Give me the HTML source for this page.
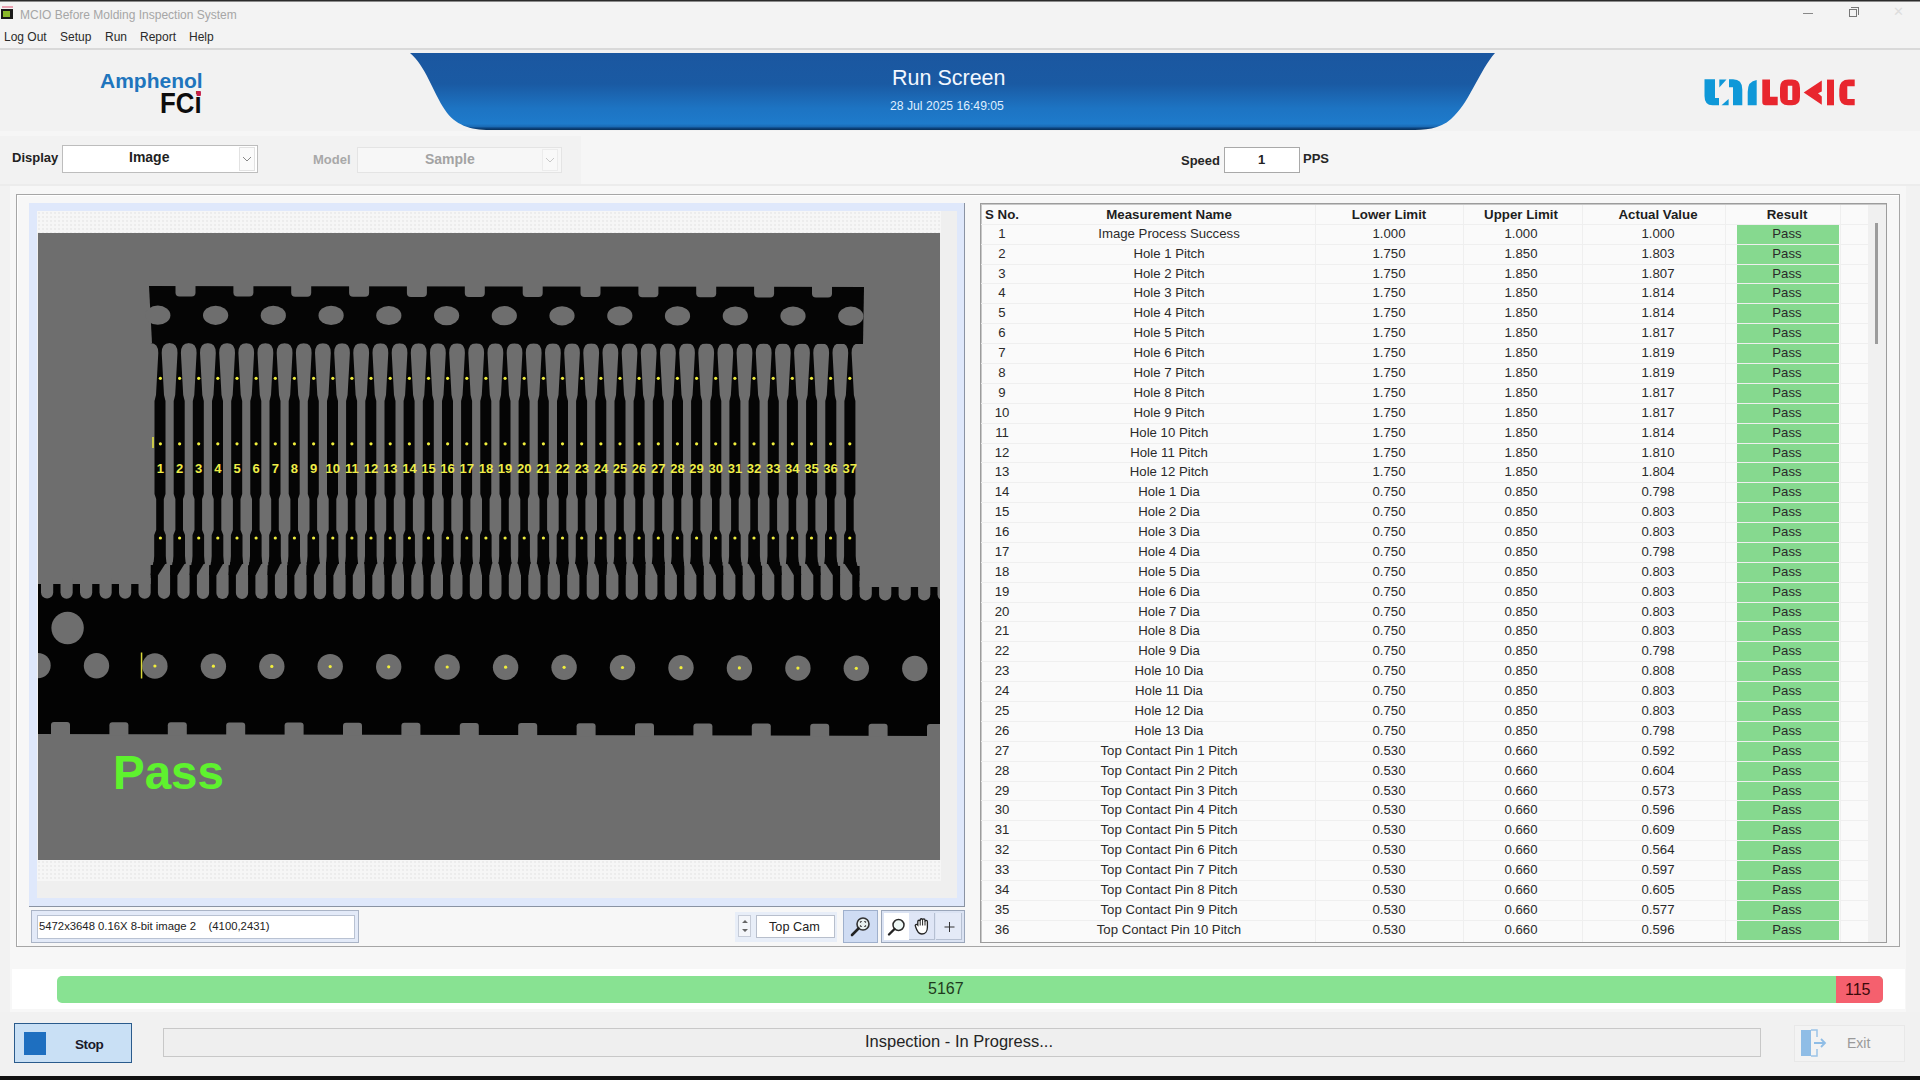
<!DOCTYPE html>
<html><head><meta charset="utf-8"><style>
*{box-sizing:border-box}
html,body{margin:0;padding:0}
body{width:1920px;height:1080px;position:relative;overflow:hidden;background:#f2f2f2;font-family:'Liberation Sans', sans-serif;color:#222}
.a{position:absolute}
.t{position:absolute;white-space:nowrap;line-height:1}
.row{position:absolute;left:0;height:20px;width:890px}
.c{position:absolute;top:0;height:20px;line-height:20px;text-align:center;font-size:13.2px;color:#2a2a2a;white-space:nowrap}
</style></head><body>

<div class="a" style="left:0;top:0;width:1920px;height:1px;background:#2b2b2b"></div><div class="a" style="left:0;top:1px;width:1920px;height:1px;background:#8a8a8a"></div>
<div class="a" style="left:0;top:2px;width:1920px;height:47px;background:#f3f3f3"></div>
<div class="a" style="left:1px;top:9px;width:12px;height:10px;background:#1a1a1a"></div><div class="a" style="left:3px;top:11px;width:7px;height:6px;background:#8ab82a"></div><div class="a" style="left:2px;top:6px;width:11px;height:2px;background:#e8a0b0"></div>
<div class="t" style="left:20px;top:9px;font-size:12px;color:#a6a6a6">MCIO Before Molding Inspection System</div>
<div class="a" style="left:1803px;top:13px;width:10px;height:1px;background:#888"></div>
<div class="a" style="left:1849px;top:9px;width:8px;height:8px;border:1px solid #777"></div><div class="a" style="left:1851px;top:7px;width:8px;height:8px;border-top:1px solid #777;border-right:1px solid #777"></div>
<div class="t" style="left:1893px;top:5px;font-size:13px;color:#ddd">&#x2715;</div>
<div class="t" style="left:4px;top:31px;font-size:12px;color:#2a2a2a">Log Out</div>
<div class="t" style="left:60px;top:31px;font-size:12px;color:#2a2a2a">Setup</div>
<div class="t" style="left:105px;top:31px;font-size:12px;color:#2a2a2a">Run</div>
<div class="t" style="left:140px;top:31px;font-size:12px;color:#2a2a2a">Report</div>
<div class="t" style="left:189px;top:31px;font-size:12px;color:#2a2a2a">Help</div>
<div class="a" style="left:0;top:48px;width:1920px;height:2px;background:#d9d9d9"></div>
<div class="t" style="left:100px;top:70px;font-size:21px;font-weight:bold;color:#2075bd;letter-spacing:0px">Amphenol</div>
<div class="t" style="left:160px;top:88.5px;font-size:29px;font-weight:bold;color:#0d0d0d;letter-spacing:0;transform:scaleX(0.89);transform-origin:0 0">FC<span style="position:relative">i<span class="a" style="left:2px;top:4px;width:5px;height:5px;border-radius:1px;background:#c8204a"></span></span></div>
<svg class="a" style="left:400px;top:50px" width="1110" height="85" viewBox="400 50 1110 85">
<defs><linearGradient id="bg" x1="0" y1="0" x2="0" y2="1">
<stop offset="0" stop-color="#1b57a0"/><stop offset="0.4" stop-color="#1a5aa3"/>
<stop offset="0.72" stop-color="#1d74c3"/><stop offset="0.92" stop-color="#1e7bcb"/>
<stop offset="0.955" stop-color="#1a6ab4"/><stop offset="0.975" stop-color="#0d4682"/><stop offset="1" stop-color="#072f58"/></linearGradient></defs>
<path d="M410,53 L1495,53 C1480,70 1470,100 1455,115 C1445,127 1430,130 1415,130 L490,130 C470,130 455,125 445,110 C433,92 425,65 410,53 Z" fill="url(#bg)"/>
</svg>
<div class="t" style="left:892px;top:68px;font-size:21.5px;color:#f2f7ff">Run Screen</div>
<div class="t" style="left:890px;top:100px;font-size:12.2px;color:#dfeeff">28 Jul 2025 16:49:05</div>
<svg class="a" style="left:1695px;top:70px" width="170" height="45" viewBox="1695 70 170 45">
<g fill="#0f98d8">
<path d="M1704.5,79.3 H1715 V98 H1719 V105.3 H1712.5 Q1704.5,105.3 1704.5,96 Z"/>
<path d="M1729,79.3 H1733 Q1742.3,79.3 1742.3,89.5 V105.3 H1733 V87.3 H1729 Z"/>
<path d="M1719.3,79.5 H1726.5 L1719.3,87.5 Z"/>
<path d="M1721.5,105.3 L1728.6,99 V105.3 Z"/>
<path d="M1756.7,80 V105.3 H1747.7 V92 Q1747.7,81 1756.7,80 Z"/>
</g>
<g fill="#e8262e">
<path d="M1762.3,79.6 H1770 V96.8 H1777.7 V105.3 H1765.5 Q1762.3,105.3 1762.3,102 Z"/>
<path d="M1788,79.6 H1792 Q1800,79.6 1800,88 V97 Q1800,105.3 1792,105.3 H1788 Q1780,105.3 1780,97 V88 Q1780,79.6 1788,79.6 Z M1787.8,85.7 V100 H1792.3 V85.7 Z" fill-rule="evenodd"/>
<path d="M1821.8,80.4 V91.5 L1818,93.3 L1821.8,96.5 V104.8 L1803.7,92.6 Z"/>
<path d="M1827,79.6 H1834 V105.3 H1827 Z"/>
<path d="M1849,79.6 H1854.7 V86.2 H1847.3 V99 H1854.7 V105.3 H1848 Q1839.3,105.3 1839.3,96 V89.5 Q1839.3,79.6 1849,79.6 Z"/>
</g></svg>
<div class="a" style="left:0;top:131px;width:1920px;height:5px;background:#f6f6f6"></div><div class="a" style="left:581px;top:136px;width:1339px;height:48px;background:#f6f6f6"></div><div class="a" style="left:0;top:184px;width:1920px;height:2px;background:#ececec"></div>
<div class="t" style="left:12px;top:151px;font-size:13px;font-weight:bold;color:#222">Display</div>
<div class="a" style="left:62px;top:145px;width:196px;height:28px;background:#fff;border:1px solid #bdbdbd"></div>
<div class="a" style="left:239px;top:147px;width:16px;height:24px;border:1px solid #e2e2e2;background:#fbfbfb"></div>
<svg class="a" style="left:241px;top:155px" width="12" height="8"><path d="M2,2 L6,6 L10,2" stroke="#888" fill="none" stroke-width="1"/></svg>
<div class="t" style="left:129px;top:150px;font-size:14px;font-weight:bold;color:#1f1f1f">Image</div>
<div class="t" style="left:313px;top:153px;font-size:13px;font-weight:bold;color:#a8a8a8">Model</div>
<div class="a" style="left:357px;top:147px;width:205px;height:26px;background:#f7f7f7;border:1px solid #e4e4e4"></div>
<div class="a" style="left:542px;top:149px;width:16px;height:22px;border:1px solid #ececec;background:#f9f9f9"></div>
<svg class="a" style="left:544px;top:156px" width="12" height="8"><path d="M2,2 L6,6 L10,2" stroke="#c8c8c8" fill="none" stroke-width="1"/></svg>
<div class="t" style="left:425px;top:152px;font-size:14px;font-weight:bold;color:#a3a3a3">Sample</div>
<div class="t" style="left:1181px;top:154px;font-size:13px;font-weight:bold;color:#262626">Speed</div>
<div class="a" style="left:1224px;top:147px;width:76px;height:26px;background:#fff;border:1px solid #a9a9a9"></div>
<div class="t" style="left:1258px;top:153px;font-size:13px;font-weight:bold;color:#222">1</div>
<div class="t" style="left:1303px;top:152px;font-size:13px;font-weight:bold;color:#262626">PPS</div>
<div class="a" style="left:10px;top:186px;width:1896px;height:828px;background:#f7f7f7"></div>
<div class="a" style="left:16px;top:194px;width:1884px;height:753px;border:1px solid #a6a6a6;box-shadow:inset 1px 1px 0 #fff"></div>
<div class="a" style="left:29px;top:203px;width:936px;height:704px;background:#dfe8fb;border-right:1.5px solid #8a93a3;border-bottom:1.5px solid #8a93a3"></div>
<div class="a" style="left:37px;top:211px;width:920px;height:687px;background:#efefef"></div>
<div class="a" style="left:37px;top:211px;width:904px;height:22px;background-color:#f6f6f6;background-image:radial-gradient(#ececec 0.7px, transparent 0.8px);background-size:4px 4px"></div>
<div class="a" style="left:37px;top:860px;width:904px;height:21px;background-color:#f6f6f6;background-image:radial-gradient(#ececec 0.7px, transparent 0.8px);background-size:4px 4px"></div>
<svg class="a" style="left:38px;top:233px" width="902" height="627" viewBox="38 233 902 627"><rect x="38" y="233" width="902" height="627" fill="#6e6e6e"/><path d="M149,286 L864,287 L863,344 L152,343 Z" fill="#050505"/><path d="M175.5,280 L195.5,280 L195.5,292.5 Q195.5,296.5 191.5,296.5 L179.5,296.5 Q175.5,296.5 175.5,292.5 Z" fill="#6e6e6e"/><path d="M233.4,280 L253.4,280 L253.4,292.6 Q253.4,296.6 249.4,296.6 L237.4,296.6 Q233.4,296.6 233.4,292.6 Z" fill="#6e6e6e"/><path d="M291.2,280 L311.2,280 L311.2,292.7 Q311.2,296.7 307.2,296.7 L295.2,296.7 Q291.2,296.7 291.2,292.7 Z" fill="#6e6e6e"/><path d="M349.1,280 L369.1,280 L369.1,292.8 Q369.1,296.8 365.1,296.8 L353.1,296.8 Q349.1,296.8 349.1,292.8 Z" fill="#6e6e6e"/><path d="M406.9,280 L426.9,280 L426.9,292.9 Q426.9,296.9 422.9,296.9 L410.9,296.9 Q406.9,296.9 406.9,292.9 Z" fill="#6e6e6e"/><path d="M464.8,280 L484.8,280 L484.8,292.9 Q484.8,296.9 480.8,296.9 L468.8,296.9 Q464.8,296.9 464.8,292.9 Z" fill="#6e6e6e"/><path d="M522.7,280 L542.7,280 L542.7,293.0 Q542.7,297.0 538.7,297.0 L526.7,297.0 Q522.7,297.0 522.7,293.0 Z" fill="#6e6e6e"/><path d="M580.5,280 L600.5,280 L600.5,293.1 Q600.5,297.1 596.5,297.1 L584.5,297.1 Q580.5,297.1 580.5,293.1 Z" fill="#6e6e6e"/><path d="M638.4,280 L658.4,280 L658.4,293.2 Q658.4,297.2 654.4,297.2 L642.4,297.2 Q638.4,297.2 638.4,293.2 Z" fill="#6e6e6e"/><path d="M696.2,280 L716.2,280 L716.2,293.3 Q716.2,297.3 712.2,297.3 L700.2,297.3 Q696.2,297.3 696.2,293.3 Z" fill="#6e6e6e"/><path d="M754.1,280 L774.1,280 L774.1,293.4 Q774.1,297.4 770.1,297.4 L758.1,297.4 Q754.1,297.4 754.1,293.4 Z" fill="#6e6e6e"/><path d="M812.0,280 L832.0,280 L832.0,293.5 Q832.0,297.5 828.0,297.5 L816.0,297.5 Q812.0,297.5 812.0,293.5 Z" fill="#6e6e6e"/><ellipse cx="157.8" cy="315.2" rx="12.6" ry="9.6" fill="#6e6e6e"/><ellipse cx="215.6" cy="315.3" rx="12.6" ry="9.6" fill="#6e6e6e"/><ellipse cx="273.3" cy="315.4" rx="12.6" ry="9.6" fill="#6e6e6e"/><ellipse cx="331.1" cy="315.4" rx="12.6" ry="9.6" fill="#6e6e6e"/><ellipse cx="388.8" cy="315.5" rx="12.6" ry="9.6" fill="#6e6e6e"/><ellipse cx="446.6" cy="315.6" rx="12.6" ry="9.6" fill="#6e6e6e"/><ellipse cx="504.3" cy="315.7" rx="12.6" ry="9.6" fill="#6e6e6e"/><ellipse cx="562.0" cy="315.8" rx="12.6" ry="9.6" fill="#6e6e6e"/><ellipse cx="619.8" cy="315.8" rx="12.6" ry="9.6" fill="#6e6e6e"/><ellipse cx="677.5" cy="315.9" rx="12.6" ry="9.6" fill="#6e6e6e"/><ellipse cx="735.3" cy="316.0" rx="12.6" ry="9.6" fill="#6e6e6e"/><ellipse cx="793.0" cy="316.1" rx="12.6" ry="9.6" fill="#6e6e6e"/><ellipse cx="850.8" cy="316.2" rx="12.6" ry="9.6" fill="#6e6e6e"/><path d="M38,584 L150.7,584 L150.7,565 L859.6,566 L859.6,587 L940,587 L940,736 L38,734 Z" fill="#030303"/><path d="M41.0,578 L53.2,578 L53.2,592.5 A6.1,6.1 0 0 1 41.0,592.5 Z" fill="#6e6e6e"/><path d="M60.5,578 L72.7,578 L72.7,592.6 A6.1,6.1 0 0 1 60.5,592.6 Z" fill="#6e6e6e"/><path d="M80.0,578 L92.2,578 L92.2,592.6 A6.1,6.1 0 0 1 80.0,592.6 Z" fill="#6e6e6e"/><path d="M99.5,578 L111.7,578 L111.7,592.6 A6.1,6.1 0 0 1 99.5,592.6 Z" fill="#6e6e6e"/><path d="M119.0,578 L131.2,578 L131.2,592.7 A6.1,6.1 0 0 1 119.0,592.7 Z" fill="#6e6e6e"/><path d="M138.5,578 L150.7,578 L150.7,592.7 A6.1,6.1 0 0 1 138.5,592.7 Z" fill="#6e6e6e"/><path d="M157.9,560 L170.1,560 L170.1,592.8 A6.1,6.1 0 0 1 157.9,592.8 Z" fill="#6e6e6e"/><path d="M177.4,560 L189.6,560 L189.6,592.8 A6.1,6.1 0 0 1 177.4,592.8 Z" fill="#6e6e6e"/><path d="M196.9,560 L209.1,560 L209.1,592.9 A6.1,6.1 0 0 1 196.9,592.9 Z" fill="#6e6e6e"/><path d="M216.4,560 L228.6,560 L228.6,592.9 A6.1,6.1 0 0 1 216.4,592.9 Z" fill="#6e6e6e"/><path d="M235.9,560 L248.1,560 L248.1,593.0 A6.1,6.1 0 0 1 235.9,593.0 Z" fill="#6e6e6e"/><path d="M255.4,560 L267.6,560 L267.6,593.0 A6.1,6.1 0 0 1 255.4,593.0 Z" fill="#6e6e6e"/><path d="M274.9,560 L287.1,560 L287.1,593.0 A6.1,6.1 0 0 1 274.9,593.0 Z" fill="#6e6e6e"/><path d="M294.4,560 L306.6,560 L306.6,593.1 A6.1,6.1 0 0 1 294.4,593.1 Z" fill="#6e6e6e"/><path d="M313.9,560 L326.1,560 L326.1,593.1 A6.1,6.1 0 0 1 313.9,593.1 Z" fill="#6e6e6e"/><path d="M333.4,560 L345.6,560 L345.6,593.2 A6.1,6.1 0 0 1 333.4,593.2 Z" fill="#6e6e6e"/><path d="M352.8,560 L365.0,560 L365.0,593.2 A6.1,6.1 0 0 1 352.8,593.2 Z" fill="#6e6e6e"/><path d="M372.3,560 L384.5,560 L384.5,593.3 A6.1,6.1 0 0 1 372.3,593.3 Z" fill="#6e6e6e"/><path d="M391.8,560 L404.0,560 L404.0,593.3 A6.1,6.1 0 0 1 391.8,593.3 Z" fill="#6e6e6e"/><path d="M411.3,560 L423.5,560 L423.5,593.3 A6.1,6.1 0 0 1 411.3,593.3 Z" fill="#6e6e6e"/><path d="M430.8,560 L443.0,560 L443.0,593.4 A6.1,6.1 0 0 1 430.8,593.4 Z" fill="#6e6e6e"/><path d="M450.3,560 L462.5,560 L462.5,593.4 A6.1,6.1 0 0 1 450.3,593.4 Z" fill="#6e6e6e"/><path d="M469.8,560 L482.0,560 L482.0,593.5 A6.1,6.1 0 0 1 469.8,593.5 Z" fill="#6e6e6e"/><path d="M489.3,560 L501.5,560 L501.5,593.5 A6.1,6.1 0 0 1 489.3,593.5 Z" fill="#6e6e6e"/><path d="M508.8,560 L521.0,560 L521.0,593.6 A6.1,6.1 0 0 1 508.8,593.6 Z" fill="#6e6e6e"/><path d="M528.3,560 L540.5,560 L540.5,593.6 A6.1,6.1 0 0 1 528.3,593.6 Z" fill="#6e6e6e"/><path d="M547.7,560 L559.9,560 L559.9,593.6 A6.1,6.1 0 0 1 547.7,593.6 Z" fill="#6e6e6e"/><path d="M567.2,560 L579.4,560 L579.4,593.7 A6.1,6.1 0 0 1 567.2,593.7 Z" fill="#6e6e6e"/><path d="M586.7,560 L598.9,560 L598.9,593.7 A6.1,6.1 0 0 1 586.7,593.7 Z" fill="#6e6e6e"/><path d="M606.2,560 L618.4,560 L618.4,593.8 A6.1,6.1 0 0 1 606.2,593.8 Z" fill="#6e6e6e"/><path d="M625.7,560 L637.9,560 L637.9,593.8 A6.1,6.1 0 0 1 625.7,593.8 Z" fill="#6e6e6e"/><path d="M645.2,560 L657.4,560 L657.4,593.9 A6.1,6.1 0 0 1 645.2,593.9 Z" fill="#6e6e6e"/><path d="M664.7,560 L676.9,560 L676.9,593.9 A6.1,6.1 0 0 1 664.7,593.9 Z" fill="#6e6e6e"/><path d="M684.2,560 L696.4,560 L696.4,593.9 A6.1,6.1 0 0 1 684.2,593.9 Z" fill="#6e6e6e"/><path d="M703.7,560 L715.9,560 L715.9,594.0 A6.1,6.1 0 0 1 703.7,594.0 Z" fill="#6e6e6e"/><path d="M723.2,560 L735.4,560 L735.4,594.0 A6.1,6.1 0 0 1 723.2,594.0 Z" fill="#6e6e6e"/><path d="M742.6,560 L754.8,560 L754.8,594.1 A6.1,6.1 0 0 1 742.6,594.1 Z" fill="#6e6e6e"/><path d="M762.1,560 L774.3,560 L774.3,594.1 A6.1,6.1 0 0 1 762.1,594.1 Z" fill="#6e6e6e"/><path d="M781.6,560 L793.8,560 L793.8,594.2 A6.1,6.1 0 0 1 781.6,594.2 Z" fill="#6e6e6e"/><path d="M801.1,560 L813.3,560 L813.3,594.2 A6.1,6.1 0 0 1 801.1,594.2 Z" fill="#6e6e6e"/><path d="M820.6,560 L832.8,560 L832.8,594.2 A6.1,6.1 0 0 1 820.6,594.2 Z" fill="#6e6e6e"/><path d="M840.1,560 L852.3,560 L852.3,594.3 A6.1,6.1 0 0 1 840.1,594.3 Z" fill="#6e6e6e"/><path d="M859.6,581 L871.8,581 L871.8,594.3 A6.1,6.1 0 0 1 859.6,594.3 Z" fill="#6e6e6e"/><path d="M879.1,581 L891.3,581 L891.3,594.4 A6.1,6.1 0 0 1 879.1,594.4 Z" fill="#6e6e6e"/><path d="M898.6,581 L910.8,581 L910.8,594.4 A6.1,6.1 0 0 1 898.6,594.4 Z" fill="#6e6e6e"/><path d="M918.1,581 L930.3,581 L930.3,594.5 A6.1,6.1 0 0 1 918.1,594.5 Z" fill="#6e6e6e"/><path d="M937.5,581 L949.7,581 L949.7,594.5 A6.1,6.1 0 0 1 937.5,594.5 Z" fill="#6e6e6e"/><path d="M150.4,343 Q158.3,343 158.3,353 L156.0,395 L154.5,401 L154.5,494 L156.2,499 L156.2,530 L154.2,535 L154.2,556 L153.5,564 L166.5,564 L165.8,556 L165.8,535 L163.8,530 L163.8,499 L165.5,494 L165.5,401 L164.0,395 L161.7,353 Q161.7,343 169.6,343 Z" fill="#050505"/><path d="M153.5,562 L166.5,562 L158.1,575 L150.5,575 Z" fill="#050505"/><path d="M169.6,343 Q177.5,343 177.5,353 L175.2,395 L173.7,401 L173.7,494 L175.4,499 L175.4,530 L173.4,535 L173.4,556 L172.7,564 L185.7,564 L185.0,556 L185.0,535 L183.0,530 L183.0,499 L184.7,494 L184.7,401 L183.2,395 L180.9,353 Q180.9,343 188.8,343 Z" fill="#050505"/><path d="M172.7,562 L185.7,562 L177.6,575 L170.0,575 Z" fill="#050505"/><path d="M188.7,343 Q196.6,343 196.6,353 L194.3,395 L192.8,401 L192.8,494 L194.5,499 L194.5,530 L192.5,535 L192.5,556 L191.8,564 L204.8,564 L204.1,556 L204.1,535 L202.1,530 L202.1,499 L203.8,494 L203.8,401 L202.3,395 L200.0,353 Q200.0,343 207.9,343 Z" fill="#050505"/><path d="M191.8,562 L204.8,562 L197.1,575 L189.5,575 Z" fill="#050505"/><path d="M207.9,343 Q215.8,343 215.8,353 L213.5,395 L212.0,401 L212.0,494 L213.7,499 L213.7,530 L211.7,535 L211.7,556 L211.0,564 L224.0,564 L223.3,556 L223.3,535 L221.3,530 L221.3,499 L223.0,494 L223.0,401 L221.5,395 L219.2,353 Q219.2,343 227.1,343 Z" fill="#050505"/><path d="M211.0,562 L224.0,562 L216.6,575 L209.0,575 Z" fill="#050505"/><path d="M227.1,343 Q235.0,343 235.0,353 L232.7,395 L231.2,401 L231.2,494 L232.9,499 L232.9,530 L230.9,535 L230.9,556 L230.2,564 L243.2,564 L242.5,556 L242.5,535 L240.5,530 L240.5,499 L242.2,494 L242.2,401 L240.7,395 L238.4,353 Q238.4,343 246.3,343 Z" fill="#050505"/><path d="M230.2,562 L243.2,562 L236.1,575 L228.5,575 Z" fill="#050505"/><path d="M246.2,343 Q254.1,343 254.1,353 L251.8,395 L250.3,401 L250.3,494 L252.0,499 L252.0,530 L250.0,535 L250.0,556 L249.3,564 L262.3,564 L261.6,556 L261.6,535 L259.6,530 L259.6,499 L261.3,494 L261.3,401 L259.8,395 L257.5,353 Q257.5,343 265.4,343 Z" fill="#050505"/><path d="M249.3,562 L262.3,562 L255.6,575 L247.9,575 Z" fill="#050505"/><path d="M265.4,343 Q273.3,343 273.3,353 L271.0,395 L269.5,401 L269.5,494 L271.2,499 L271.2,530 L269.2,535 L269.2,556 L268.5,564 L281.5,564 L280.8,556 L280.8,535 L278.8,530 L278.8,499 L280.5,494 L280.5,401 L279.0,395 L276.7,353 Q276.7,343 284.6,343 Z" fill="#050505"/><path d="M268.5,562 L281.5,562 L275.0,575 L267.4,575 Z" fill="#050505"/><path d="M284.6,343 Q292.5,343 292.5,353 L290.2,395 L288.7,401 L288.7,494 L290.4,499 L290.4,530 L288.4,535 L288.4,556 L287.7,564 L300.7,564 L300.0,556 L300.0,535 L298.0,530 L298.0,499 L299.7,494 L299.7,401 L298.2,395 L295.9,353 Q295.9,343 303.8,343 Z" fill="#050505"/><path d="M287.7,562 L300.7,562 L294.5,575 L286.9,575 Z" fill="#050505"/><path d="M303.7,343 Q311.6,343 311.6,353 L309.3,395 L307.8,401 L307.8,494 L309.5,499 L309.5,530 L307.5,535 L307.5,556 L306.8,564 L319.8,564 L319.1,556 L319.1,535 L317.1,530 L317.1,499 L318.8,494 L318.8,401 L317.3,395 L315.0,353 Q315.0,343 322.9,343 Z" fill="#050505"/><path d="M306.8,562 L319.8,562 L314.0,575 L306.4,575 Z" fill="#050505"/><path d="M322.9,343 Q330.8,343 330.8,353 L328.5,395 L327.0,401 L327.0,494 L328.7,499 L328.7,530 L326.7,535 L326.7,556 L326.0,564 L339.0,564 L338.3,556 L338.3,535 L336.3,530 L336.3,499 L338.0,494 L338.0,401 L336.5,395 L334.2,353 Q334.2,343 342.1,343 Z" fill="#050505"/><path d="M326.0,562 L339.0,562 L333.5,575 L325.9,575 Z" fill="#050505"/><path d="M342.0,343 Q349.9,343 349.9,353 L347.6,395 L346.1,401 L346.1,494 L347.8,499 L347.8,530 L345.8,535 L345.8,556 L345.1,564 L358.1,564 L357.4,556 L357.4,535 L355.4,530 L355.4,499 L357.1,494 L357.1,401 L355.6,395 L353.3,353 Q353.3,343 361.2,343 Z" fill="#050505"/><path d="M345.1,562 L358.1,562 L353.0,575 L345.4,575 Z" fill="#050505"/><path d="M361.2,343 Q369.1,343 369.1,353 L366.8,395 L365.3,401 L365.3,494 L367.0,499 L367.0,530 L365.0,535 L365.0,556 L364.3,564 L377.3,564 L376.6,556 L376.6,535 L374.6,530 L374.6,499 L376.3,494 L376.3,401 L374.8,395 L372.5,353 Q372.5,343 380.4,343 Z" fill="#050505"/><path d="M364.3,562 L377.3,562 L372.5,575 L364.9,575 Z" fill="#050505"/><path d="M380.4,343 Q388.3,343 388.3,353 L386.0,395 L384.5,401 L384.5,494 L386.2,499 L386.2,530 L384.2,535 L384.2,556 L383.5,564 L396.5,564 L395.8,556 L395.8,535 L393.8,530 L393.8,499 L395.5,494 L395.5,401 L394.0,395 L391.7,353 Q391.7,343 399.6,343 Z" fill="#050505"/><path d="M383.5,562 L396.5,562 L392.0,575 L384.4,575 Z" fill="#050505"/><path d="M399.5,343 Q407.4,343 407.4,353 L405.1,395 L403.6,401 L403.6,494 L405.3,499 L405.3,530 L403.3,535 L403.3,556 L402.6,564 L415.6,564 L414.9,556 L414.9,535 L412.9,530 L412.9,499 L414.6,494 L414.6,401 L413.1,395 L410.8,353 Q410.8,343 418.7,343 Z" fill="#050505"/><path d="M402.6,562 L415.6,562 L411.5,575 L403.9,575 Z" fill="#050505"/><path d="M418.7,343 Q426.6,343 426.6,353 L424.3,395 L422.8,401 L422.8,494 L424.5,499 L424.5,530 L422.5,535 L422.5,556 L421.8,564 L434.8,564 L434.1,556 L434.1,535 L432.1,530 L432.1,499 L433.8,494 L433.8,401 L432.3,395 L430.0,353 Q430.0,343 437.9,343 Z" fill="#050505"/><path d="M421.8,562 L434.8,562 L431.0,575 L423.4,575 Z" fill="#050505"/><path d="M437.9,343 Q445.8,343 445.8,353 L443.5,395 L442.0,401 L442.0,494 L443.7,499 L443.7,530 L441.7,535 L441.7,556 L441.0,564 L454.0,564 L453.3,556 L453.3,535 L451.3,530 L451.3,499 L453.0,494 L453.0,401 L451.5,395 L449.2,353 Q449.2,343 457.1,343 Z" fill="#050505"/><path d="M441.0,562 L454.0,562 L450.4,575 L442.8,575 Z" fill="#050505"/><path d="M457.0,343 Q464.9,343 464.9,353 L462.6,395 L461.1,401 L461.1,494 L462.8,499 L462.8,530 L460.8,535 L460.8,556 L460.1,564 L473.1,564 L472.4,556 L472.4,535 L470.4,530 L470.4,499 L472.1,494 L472.1,401 L470.6,395 L468.3,353 Q468.3,343 476.2,343 Z" fill="#050505"/><path d="M460.1,562 L473.1,562 L469.9,575 L462.3,575 Z" fill="#050505"/><path d="M476.2,343 Q484.1,343 484.1,353 L481.8,395 L480.3,401 L480.3,494 L482.0,499 L482.0,530 L480.0,535 L480.0,556 L479.3,564 L492.3,564 L491.6,556 L491.6,535 L489.6,530 L489.6,499 L491.3,494 L491.3,401 L489.8,395 L487.5,353 Q487.5,343 495.4,343 Z" fill="#050505"/><path d="M479.3,562 L492.3,562 L489.4,575 L481.8,575 Z" fill="#050505"/><path d="M495.4,343 Q503.3,343 503.3,353 L501.0,395 L499.5,401 L499.5,494 L501.2,499 L501.2,530 L499.2,535 L499.2,556 L498.5,564 L511.5,564 L510.8,556 L510.8,535 L508.8,530 L508.8,499 L510.5,494 L510.5,401 L509.0,395 L506.7,353 Q506.7,343 514.6,343 Z" fill="#050505"/><path d="M498.5,562 L511.5,562 L508.9,575 L501.3,575 Z" fill="#050505"/><path d="M514.5,343 Q522.4,343 522.4,353 L520.1,395 L518.6,401 L518.6,494 L520.3,499 L520.3,530 L518.3,535 L518.3,556 L517.6,564 L530.6,564 L529.9,556 L529.9,535 L527.9,530 L527.9,499 L529.6,494 L529.6,401 L528.1,395 L525.8,353 Q525.8,343 533.7,343 Z" fill="#050505"/><path d="M517.6,562 L530.6,562 L528.4,575 L520.8,575 Z" fill="#050505"/><path d="M533.7,343 Q541.6,343 541.6,353 L539.3,395 L537.8,401 L537.8,494 L539.5,499 L539.5,530 L537.5,535 L537.5,556 L536.8,564 L549.8,564 L549.1,556 L549.1,535 L547.1,530 L547.1,499 L548.8,494 L548.8,401 L547.3,395 L545.0,353 Q545.0,343 552.9,343 Z" fill="#050505"/><path d="M536.8,562 L549.8,562 L547.9,575 L540.3,575 Z" fill="#050505"/><path d="M552.9,343 Q560.8,343 560.8,353 L558.5,395 L557.0,401 L557.0,494 L558.7,499 L558.7,530 L556.7,535 L556.7,556 L556.0,564 L569.0,564 L568.3,556 L568.3,535 L566.3,530 L566.3,499 L568.0,494 L568.0,401 L566.5,395 L564.2,353 Q564.2,343 572.1,343 Z" fill="#050505"/><path d="M556.0,562 L569.0,562 L567.4,575 L559.8,575 Z" fill="#050505"/><path d="M572.0,343 Q579.9,343 579.9,353 L577.6,395 L576.1,401 L576.1,494 L577.8,499 L577.8,530 L575.8,535 L575.8,556 L575.1,564 L588.1,564 L587.4,556 L587.4,535 L585.4,530 L585.4,499 L587.1,494 L587.1,401 L585.6,395 L583.3,353 Q583.3,343 591.2,343 Z" fill="#050505"/><path d="M575.1,562 L588.1,562 L586.9,575 L579.3,575 Z" fill="#050505"/><path d="M591.2,343 Q599.1,343 599.1,353 L596.8,395 L595.3,401 L595.3,494 L597.0,499 L597.0,530 L595.0,535 L595.0,556 L594.3,564 L607.3,564 L606.6,556 L606.6,535 L604.6,530 L604.6,499 L606.3,494 L606.3,401 L604.8,395 L602.5,353 Q602.5,343 610.4,343 Z" fill="#050505"/><path d="M594.3,562 L607.3,562 L606.4,575 L598.8,575 Z" fill="#050505"/><path d="M610.4,343 Q618.3,343 618.3,353 L616.0,395 L614.5,401 L614.5,494 L616.2,499 L616.2,530 L614.2,535 L614.2,556 L613.5,564 L626.5,564 L625.8,556 L625.8,535 L623.8,530 L623.8,499 L625.5,494 L625.5,401 L624.0,395 L621.7,353 Q621.7,343 629.6,343 Z" fill="#050505"/><path d="M613.5,562 L626.5,562 L625.9,575 L618.3,575 Z" fill="#050505"/><path d="M629.5,343 Q637.4,343 637.4,353 L635.1,395 L633.6,401 L633.6,494 L635.3,499 L635.3,530 L633.3,535 L633.3,556 L632.6,564 L645.6,564 L644.9,556 L644.9,535 L642.9,530 L642.9,499 L644.6,494 L644.6,401 L643.1,395 L640.8,353 Q640.8,343 648.7,343 Z" fill="#050505"/><path d="M632.6,562 L645.6,562 L645.3,575 L637.8,575 Z" fill="#050505"/><path d="M648.7,343 Q656.6,343 656.6,353 L654.3,395 L652.8,401 L652.8,494 L654.5,499 L654.5,530 L652.5,535 L652.5,556 L651.8,564 L664.8,564 L664.1,556 L664.1,535 L662.1,530 L662.1,499 L663.8,494 L663.8,401 L662.3,395 L660.0,353 Q660.0,343 667.9,343 Z" fill="#050505"/><path d="M651.8,562 L664.8,562 L664.8,575 L657.2,575 Z" fill="#050505"/><path d="M667.9,343 Q675.8,343 675.8,353 L673.5,395 L672.0,401 L672.0,494 L673.7,499 L673.7,530 L671.7,535 L671.7,556 L671.0,564 L684.0,564 L683.3,556 L683.3,535 L681.3,530 L681.3,499 L683.0,494 L683.0,401 L681.5,395 L679.2,353 Q679.2,343 687.1,343 Z" fill="#050505"/><path d="M671.0,562 L684.0,562 L684.3,575 L676.7,575 Z" fill="#050505"/><path d="M687.0,343 Q694.9,343 694.9,353 L692.6,395 L691.1,401 L691.1,494 L692.8,499 L692.8,530 L690.8,535 L690.8,556 L690.1,564 L703.1,564 L702.4,556 L702.4,535 L700.4,530 L700.4,499 L702.1,494 L702.1,401 L700.6,395 L698.3,353 Q698.3,343 706.2,343 Z" fill="#050505"/><path d="M690.1,562 L703.1,562 L703.8,575 L696.2,575 Z" fill="#050505"/><path d="M706.2,343 Q714.1,343 714.1,353 L711.8,395 L710.3,401 L710.3,494 L712.0,499 L712.0,530 L710.0,535 L710.0,556 L709.3,564 L722.3,564 L721.6,556 L721.6,535 L719.6,530 L719.6,499 L721.3,494 L721.3,401 L719.8,395 L717.5,353 Q717.5,343 725.4,343 Z" fill="#050505"/><path d="M709.3,562 L722.3,562 L723.3,575 L715.7,575 Z" fill="#050505"/><path d="M725.3,343 Q733.2,343 733.2,353 L730.9,395 L729.4,401 L729.4,494 L731.1,499 L731.1,530 L729.1,535 L729.1,556 L728.4,564 L741.4,564 L740.7,556 L740.7,535 L738.7,530 L738.7,499 L740.4,494 L740.4,401 L738.9,395 L736.6,353 Q736.6,343 744.5,343 Z" fill="#050505"/><path d="M728.4,562 L741.4,562 L742.8,575 L735.2,575 Z" fill="#050505"/><path d="M744.5,343 Q752.4,343 752.4,353 L750.1,395 L748.6,401 L748.6,494 L750.3,499 L750.3,530 L748.3,535 L748.3,556 L747.6,564 L760.6,564 L759.9,556 L759.9,535 L757.9,530 L757.9,499 L759.6,494 L759.6,401 L758.1,395 L755.8,353 Q755.8,343 763.7,343 Z" fill="#050505"/><path d="M747.6,562 L760.6,562 L762.3,575 L754.7,575 Z" fill="#050505"/><path d="M763.7,343 Q771.6,343 771.6,353 L769.3,395 L767.8,401 L767.8,494 L769.5,499 L769.5,530 L767.5,535 L767.5,556 L766.8,564 L779.8,564 L779.1,556 L779.1,535 L777.1,530 L777.1,499 L778.8,494 L778.8,401 L777.3,395 L775.0,353 Q775.0,343 782.9,343 Z" fill="#050505"/><path d="M766.8,562 L779.8,562 L781.8,575 L774.2,575 Z" fill="#050505"/><path d="M782.8,343 Q790.7,343 790.7,353 L788.4,395 L786.9,401 L786.9,494 L788.6,499 L788.6,530 L786.6,535 L786.6,556 L785.9,564 L798.9,564 L798.2,556 L798.2,535 L796.2,530 L796.2,499 L797.9,494 L797.9,401 L796.4,395 L794.1,353 Q794.1,343 802.0,343 Z" fill="#050505"/><path d="M785.9,562 L798.9,562 L801.3,575 L793.7,575 Z" fill="#050505"/><path d="M802.0,343 Q809.9,343 809.9,353 L807.6,395 L806.1,401 L806.1,494 L807.8,499 L807.8,530 L805.8,535 L805.8,556 L805.1,564 L818.1,564 L817.4,556 L817.4,535 L815.4,530 L815.4,499 L817.1,494 L817.1,401 L815.6,395 L813.3,353 Q813.3,343 821.2,343 Z" fill="#050505"/><path d="M805.1,562 L818.1,562 L820.8,575 L813.2,575 Z" fill="#050505"/><path d="M821.2,343 Q829.1,343 829.1,353 L826.8,395 L825.3,401 L825.3,494 L827.0,499 L827.0,530 L825.0,535 L825.0,556 L824.3,564 L837.3,564 L836.6,556 L836.6,535 L834.6,530 L834.6,499 L836.3,494 L836.3,401 L834.8,395 L832.5,353 Q832.5,343 840.4,343 Z" fill="#050505"/><path d="M824.3,562 L837.3,562 L840.2,575 L832.7,575 Z" fill="#050505"/><path d="M840.3,343 Q848.2,343 848.2,353 L845.9,395 L844.4,401 L844.4,494 L846.1,499 L846.1,530 L844.1,535 L844.1,556 L843.4,564 L856.4,564 L855.7,556 L855.7,535 L853.7,530 L853.7,499 L855.4,494 L855.4,401 L853.9,395 L851.6,353 Q851.6,343 859.5,343 Z" fill="#050505"/><path d="M843.4,562 L856.4,562 L859.7,575 L852.1,575 Z" fill="#050505"/><circle cx="67.6" cy="628" r="16.2" fill="#6e6e6e"/><circle cx="38.0" cy="665.6" r="12.7" fill="#6e6e6e"/><circle cx="96.5" cy="665.8" r="12.7" fill="#6e6e6e"/><circle cx="154.9" cy="666.0" r="12.7" fill="#6e6e6e"/><circle cx="213.4" cy="666.2" r="12.7" fill="#6e6e6e"/><circle cx="271.8" cy="666.4" r="12.7" fill="#6e6e6e"/><circle cx="330.2" cy="666.6" r="12.7" fill="#6e6e6e"/><circle cx="388.7" cy="666.8" r="12.7" fill="#6e6e6e"/><circle cx="447.2" cy="667.0" r="12.7" fill="#6e6e6e"/><circle cx="505.6" cy="667.2" r="12.7" fill="#6e6e6e"/><circle cx="564.1" cy="667.3" r="12.7" fill="#6e6e6e"/><circle cx="622.5" cy="667.5" r="12.7" fill="#6e6e6e"/><circle cx="681.0" cy="667.7" r="12.7" fill="#6e6e6e"/><circle cx="739.4" cy="667.9" r="12.7" fill="#6e6e6e"/><circle cx="797.9" cy="668.1" r="12.7" fill="#6e6e6e"/><circle cx="856.3" cy="668.3" r="12.7" fill="#6e6e6e"/><circle cx="914.8" cy="668.5" r="12.7" fill="#6e6e6e"/><path d="M51.0,735.0 L51.0,725.0 Q51.0,722.0 54.0,722.0 L67.0,722.0 Q70.0,722.0 70.0,725.0 L70.0,735.0 Z" fill="#6e6e6e"/><path d="M109.4,735.2 L109.4,725.2 Q109.4,722.2 112.4,722.2 L125.4,722.2 Q128.4,722.2 128.4,725.2 L128.4,735.2 Z" fill="#6e6e6e"/><path d="M167.8,735.3 L167.8,725.3 Q167.8,722.3 170.8,722.3 L183.8,722.3 Q186.8,722.3 186.8,725.3 L186.8,735.3 Z" fill="#6e6e6e"/><path d="M226.2,735.4 L226.2,725.4 Q226.2,722.4 229.2,722.4 L242.2,722.4 Q245.2,722.4 245.2,725.4 L245.2,735.4 Z" fill="#6e6e6e"/><path d="M284.6,735.5 L284.6,725.5 Q284.6,722.5 287.6,722.5 L300.6,722.5 Q303.6,722.5 303.6,725.5 L303.6,735.5 Z" fill="#6e6e6e"/><path d="M343.0,735.7 L343.0,725.7 Q343.0,722.7 346.0,722.7 L359.0,722.7 Q362.0,722.7 362.0,725.7 L362.0,735.7 Z" fill="#6e6e6e"/><path d="M401.4,735.8 L401.4,725.8 Q401.4,722.8 404.4,722.8 L417.4,722.8 Q420.4,722.8 420.4,725.8 L420.4,735.8 Z" fill="#6e6e6e"/><path d="M459.8,735.9 L459.8,725.9 Q459.8,722.9 462.8,722.9 L475.8,722.9 Q478.8,722.9 478.8,725.9 L478.8,735.9 Z" fill="#6e6e6e"/><path d="M518.2,736.1 L518.2,726.1 Q518.2,723.1 521.2,723.1 L534.2,723.1 Q537.2,723.1 537.2,726.1 L537.2,736.1 Z" fill="#6e6e6e"/><path d="M576.6,736.2 L576.6,726.2 Q576.6,723.2 579.6,723.2 L592.6,723.2 Q595.6,723.2 595.6,726.2 L595.6,736.2 Z" fill="#6e6e6e"/><path d="M635.0,736.3 L635.0,726.3 Q635.0,723.3 638.0,723.3 L651.0,723.3 Q654.0,723.3 654.0,726.3 L654.0,736.3 Z" fill="#6e6e6e"/><path d="M693.4,736.5 L693.4,726.5 Q693.4,723.5 696.4,723.5 L709.4,723.5 Q712.4,723.5 712.4,726.5 L712.4,736.5 Z" fill="#6e6e6e"/><path d="M751.8,736.6 L751.8,726.6 Q751.8,723.6 754.8,723.6 L767.8,723.6 Q770.8,723.6 770.8,726.6 L770.8,736.6 Z" fill="#6e6e6e"/><path d="M810.2,736.7 L810.2,726.7 Q810.2,723.7 813.2,723.7 L826.2,723.7 Q829.2,723.7 829.2,726.7 L829.2,736.7 Z" fill="#6e6e6e"/><path d="M868.6,736.8 L868.6,726.8 Q868.6,723.8 871.6,723.8 L884.6,723.8 Q887.6,723.8 887.6,726.8 L887.6,736.8 Z" fill="#6e6e6e"/><path d="M927.0,737.0 L927.0,727.0 Q927.0,724.0 930.0,724.0 L943.0,724.0 Q946.0,724.0 946.0,727.0 L946.0,737.0 Z" fill="#6e6e6e"/><circle cx="160.4" cy="378.3" r="1.6" fill="#f0ee3c"/><circle cx="160.4" cy="443.8" r="1.6" fill="#f0ee3c"/><circle cx="160.4" cy="538" r="1.6" fill="#f0ee3c"/><text x="160.4" y="473" text-anchor="middle" font-family="Liberation Sans" font-weight="bold" font-size="13" fill="#eeec48">1</text><circle cx="179.6" cy="378.3" r="1.6" fill="#f0ee3c"/><circle cx="179.6" cy="443.8" r="1.6" fill="#f0ee3c"/><circle cx="179.6" cy="538" r="1.6" fill="#f0ee3c"/><text x="179.6" y="473" text-anchor="middle" font-family="Liberation Sans" font-weight="bold" font-size="13" fill="#eeec48">2</text><circle cx="198.7" cy="378.3" r="1.6" fill="#f0ee3c"/><circle cx="198.7" cy="443.8" r="1.6" fill="#f0ee3c"/><circle cx="198.7" cy="538" r="1.6" fill="#f0ee3c"/><text x="198.7" y="473" text-anchor="middle" font-family="Liberation Sans" font-weight="bold" font-size="13" fill="#eeec48">3</text><circle cx="217.8" cy="378.3" r="1.6" fill="#f0ee3c"/><circle cx="217.8" cy="443.8" r="1.6" fill="#f0ee3c"/><circle cx="217.8" cy="538" r="1.6" fill="#f0ee3c"/><text x="217.8" y="473" text-anchor="middle" font-family="Liberation Sans" font-weight="bold" font-size="13" fill="#eeec48">4</text><circle cx="237.0" cy="378.3" r="1.6" fill="#f0ee3c"/><circle cx="237.0" cy="443.8" r="1.6" fill="#f0ee3c"/><circle cx="237.0" cy="538" r="1.6" fill="#f0ee3c"/><text x="237.0" y="473" text-anchor="middle" font-family="Liberation Sans" font-weight="bold" font-size="13" fill="#eeec48">5</text><circle cx="256.1" cy="378.3" r="1.6" fill="#f0ee3c"/><circle cx="256.1" cy="443.8" r="1.6" fill="#f0ee3c"/><circle cx="256.1" cy="538" r="1.6" fill="#f0ee3c"/><text x="256.1" y="473" text-anchor="middle" font-family="Liberation Sans" font-weight="bold" font-size="13" fill="#eeec48">6</text><circle cx="275.3" cy="378.3" r="1.6" fill="#f0ee3c"/><circle cx="275.3" cy="443.8" r="1.6" fill="#f0ee3c"/><circle cx="275.3" cy="538" r="1.6" fill="#f0ee3c"/><text x="275.3" y="473" text-anchor="middle" font-family="Liberation Sans" font-weight="bold" font-size="13" fill="#eeec48">7</text><circle cx="294.4" cy="378.3" r="1.6" fill="#f0ee3c"/><circle cx="294.4" cy="443.8" r="1.6" fill="#f0ee3c"/><circle cx="294.4" cy="538" r="1.6" fill="#f0ee3c"/><text x="294.4" y="473" text-anchor="middle" font-family="Liberation Sans" font-weight="bold" font-size="13" fill="#eeec48">8</text><circle cx="313.6" cy="378.3" r="1.6" fill="#f0ee3c"/><circle cx="313.6" cy="443.8" r="1.6" fill="#f0ee3c"/><circle cx="313.6" cy="538" r="1.6" fill="#f0ee3c"/><text x="313.6" y="473" text-anchor="middle" font-family="Liberation Sans" font-weight="bold" font-size="13" fill="#eeec48">9</text><circle cx="332.8" cy="378.3" r="1.6" fill="#f0ee3c"/><circle cx="332.8" cy="443.8" r="1.6" fill="#f0ee3c"/><circle cx="332.8" cy="538" r="1.6" fill="#f0ee3c"/><text x="332.8" y="473" text-anchor="middle" font-family="Liberation Sans" font-weight="bold" font-size="13" fill="#eeec48">10</text><circle cx="351.9" cy="378.3" r="1.6" fill="#f0ee3c"/><circle cx="351.9" cy="443.8" r="1.6" fill="#f0ee3c"/><circle cx="351.9" cy="538" r="1.6" fill="#f0ee3c"/><text x="351.9" y="473" text-anchor="middle" font-family="Liberation Sans" font-weight="bold" font-size="13" fill="#eeec48">11</text><circle cx="371.0" cy="378.3" r="1.6" fill="#f0ee3c"/><circle cx="371.0" cy="443.8" r="1.6" fill="#f0ee3c"/><circle cx="371.0" cy="538" r="1.6" fill="#f0ee3c"/><text x="371.0" y="473" text-anchor="middle" font-family="Liberation Sans" font-weight="bold" font-size="13" fill="#eeec48">12</text><circle cx="390.2" cy="378.3" r="1.6" fill="#f0ee3c"/><circle cx="390.2" cy="443.8" r="1.6" fill="#f0ee3c"/><circle cx="390.2" cy="538" r="1.6" fill="#f0ee3c"/><text x="390.2" y="473" text-anchor="middle" font-family="Liberation Sans" font-weight="bold" font-size="13" fill="#eeec48">13</text><circle cx="409.4" cy="378.3" r="1.6" fill="#f0ee3c"/><circle cx="409.4" cy="443.8" r="1.6" fill="#f0ee3c"/><circle cx="409.4" cy="538" r="1.6" fill="#f0ee3c"/><text x="409.4" y="473" text-anchor="middle" font-family="Liberation Sans" font-weight="bold" font-size="13" fill="#eeec48">14</text><circle cx="428.5" cy="378.3" r="1.6" fill="#f0ee3c"/><circle cx="428.5" cy="443.8" r="1.6" fill="#f0ee3c"/><circle cx="428.5" cy="538" r="1.6" fill="#f0ee3c"/><text x="428.5" y="473" text-anchor="middle" font-family="Liberation Sans" font-weight="bold" font-size="13" fill="#eeec48">15</text><circle cx="447.6" cy="378.3" r="1.6" fill="#f0ee3c"/><circle cx="447.6" cy="443.8" r="1.6" fill="#f0ee3c"/><circle cx="447.6" cy="538" r="1.6" fill="#f0ee3c"/><text x="447.6" y="473" text-anchor="middle" font-family="Liberation Sans" font-weight="bold" font-size="13" fill="#eeec48">16</text><circle cx="466.8" cy="378.3" r="1.6" fill="#f0ee3c"/><circle cx="466.8" cy="443.8" r="1.6" fill="#f0ee3c"/><circle cx="466.8" cy="538" r="1.6" fill="#f0ee3c"/><text x="466.8" y="473" text-anchor="middle" font-family="Liberation Sans" font-weight="bold" font-size="13" fill="#eeec48">17</text><circle cx="485.9" cy="378.3" r="1.6" fill="#f0ee3c"/><circle cx="485.9" cy="443.8" r="1.6" fill="#f0ee3c"/><circle cx="485.9" cy="538" r="1.6" fill="#f0ee3c"/><text x="485.9" y="473" text-anchor="middle" font-family="Liberation Sans" font-weight="bold" font-size="13" fill="#eeec48">18</text><circle cx="505.1" cy="378.3" r="1.6" fill="#f0ee3c"/><circle cx="505.1" cy="443.8" r="1.6" fill="#f0ee3c"/><circle cx="505.1" cy="538" r="1.6" fill="#f0ee3c"/><text x="505.1" y="473" text-anchor="middle" font-family="Liberation Sans" font-weight="bold" font-size="13" fill="#eeec48">19</text><circle cx="524.2" cy="378.3" r="1.6" fill="#f0ee3c"/><circle cx="524.2" cy="443.8" r="1.6" fill="#f0ee3c"/><circle cx="524.2" cy="538" r="1.6" fill="#f0ee3c"/><text x="524.2" y="473" text-anchor="middle" font-family="Liberation Sans" font-weight="bold" font-size="13" fill="#eeec48">20</text><circle cx="543.4" cy="378.3" r="1.6" fill="#f0ee3c"/><circle cx="543.4" cy="443.8" r="1.6" fill="#f0ee3c"/><circle cx="543.4" cy="538" r="1.6" fill="#f0ee3c"/><text x="543.4" y="473" text-anchor="middle" font-family="Liberation Sans" font-weight="bold" font-size="13" fill="#eeec48">21</text><circle cx="562.5" cy="378.3" r="1.6" fill="#f0ee3c"/><circle cx="562.5" cy="443.8" r="1.6" fill="#f0ee3c"/><circle cx="562.5" cy="538" r="1.6" fill="#f0ee3c"/><text x="562.5" y="473" text-anchor="middle" font-family="Liberation Sans" font-weight="bold" font-size="13" fill="#eeec48">22</text><circle cx="581.7" cy="378.3" r="1.6" fill="#f0ee3c"/><circle cx="581.7" cy="443.8" r="1.6" fill="#f0ee3c"/><circle cx="581.7" cy="538" r="1.6" fill="#f0ee3c"/><text x="581.7" y="473" text-anchor="middle" font-family="Liberation Sans" font-weight="bold" font-size="13" fill="#eeec48">23</text><circle cx="600.9" cy="378.3" r="1.6" fill="#f0ee3c"/><circle cx="600.9" cy="443.8" r="1.6" fill="#f0ee3c"/><circle cx="600.9" cy="538" r="1.6" fill="#f0ee3c"/><text x="600.9" y="473" text-anchor="middle" font-family="Liberation Sans" font-weight="bold" font-size="13" fill="#eeec48">24</text><circle cx="620.0" cy="378.3" r="1.6" fill="#f0ee3c"/><circle cx="620.0" cy="443.8" r="1.6" fill="#f0ee3c"/><circle cx="620.0" cy="538" r="1.6" fill="#f0ee3c"/><text x="620.0" y="473" text-anchor="middle" font-family="Liberation Sans" font-weight="bold" font-size="13" fill="#eeec48">25</text><circle cx="639.1" cy="378.3" r="1.6" fill="#f0ee3c"/><circle cx="639.1" cy="443.8" r="1.6" fill="#f0ee3c"/><circle cx="639.1" cy="538" r="1.6" fill="#f0ee3c"/><text x="639.1" y="473" text-anchor="middle" font-family="Liberation Sans" font-weight="bold" font-size="13" fill="#eeec48">26</text><circle cx="658.3" cy="378.3" r="1.6" fill="#f0ee3c"/><circle cx="658.3" cy="443.8" r="1.6" fill="#f0ee3c"/><circle cx="658.3" cy="538" r="1.6" fill="#f0ee3c"/><text x="658.3" y="473" text-anchor="middle" font-family="Liberation Sans" font-weight="bold" font-size="13" fill="#eeec48">27</text><circle cx="677.4" cy="378.3" r="1.6" fill="#f0ee3c"/><circle cx="677.4" cy="443.8" r="1.6" fill="#f0ee3c"/><circle cx="677.4" cy="538" r="1.6" fill="#f0ee3c"/><text x="677.4" y="473" text-anchor="middle" font-family="Liberation Sans" font-weight="bold" font-size="13" fill="#eeec48">28</text><circle cx="696.6" cy="378.3" r="1.6" fill="#f0ee3c"/><circle cx="696.6" cy="443.8" r="1.6" fill="#f0ee3c"/><circle cx="696.6" cy="538" r="1.6" fill="#f0ee3c"/><text x="696.6" y="473" text-anchor="middle" font-family="Liberation Sans" font-weight="bold" font-size="13" fill="#eeec48">29</text><circle cx="715.7" cy="378.3" r="1.6" fill="#f0ee3c"/><circle cx="715.7" cy="443.8" r="1.6" fill="#f0ee3c"/><circle cx="715.7" cy="538" r="1.6" fill="#f0ee3c"/><text x="715.7" y="473" text-anchor="middle" font-family="Liberation Sans" font-weight="bold" font-size="13" fill="#eeec48">30</text><circle cx="734.9" cy="378.3" r="1.6" fill="#f0ee3c"/><circle cx="734.9" cy="443.8" r="1.6" fill="#f0ee3c"/><circle cx="734.9" cy="538" r="1.6" fill="#f0ee3c"/><text x="734.9" y="473" text-anchor="middle" font-family="Liberation Sans" font-weight="bold" font-size="13" fill="#eeec48">31</text><circle cx="754.0" cy="378.3" r="1.6" fill="#f0ee3c"/><circle cx="754.0" cy="443.8" r="1.6" fill="#f0ee3c"/><circle cx="754.0" cy="538" r="1.6" fill="#f0ee3c"/><text x="754.0" y="473" text-anchor="middle" font-family="Liberation Sans" font-weight="bold" font-size="13" fill="#eeec48">32</text><circle cx="773.2" cy="378.3" r="1.6" fill="#f0ee3c"/><circle cx="773.2" cy="443.8" r="1.6" fill="#f0ee3c"/><circle cx="773.2" cy="538" r="1.6" fill="#f0ee3c"/><text x="773.2" y="473" text-anchor="middle" font-family="Liberation Sans" font-weight="bold" font-size="13" fill="#eeec48">33</text><circle cx="792.3" cy="378.3" r="1.6" fill="#f0ee3c"/><circle cx="792.3" cy="443.8" r="1.6" fill="#f0ee3c"/><circle cx="792.3" cy="538" r="1.6" fill="#f0ee3c"/><text x="792.3" y="473" text-anchor="middle" font-family="Liberation Sans" font-weight="bold" font-size="13" fill="#eeec48">34</text><circle cx="811.5" cy="378.3" r="1.6" fill="#f0ee3c"/><circle cx="811.5" cy="443.8" r="1.6" fill="#f0ee3c"/><circle cx="811.5" cy="538" r="1.6" fill="#f0ee3c"/><text x="811.5" y="473" text-anchor="middle" font-family="Liberation Sans" font-weight="bold" font-size="13" fill="#eeec48">35</text><circle cx="830.6" cy="378.3" r="1.6" fill="#f0ee3c"/><circle cx="830.6" cy="443.8" r="1.6" fill="#f0ee3c"/><circle cx="830.6" cy="538" r="1.6" fill="#f0ee3c"/><text x="830.6" y="473" text-anchor="middle" font-family="Liberation Sans" font-weight="bold" font-size="13" fill="#eeec48">36</text><circle cx="849.8" cy="378.3" r="1.6" fill="#f0ee3c"/><circle cx="849.8" cy="443.8" r="1.6" fill="#f0ee3c"/><circle cx="849.8" cy="538" r="1.6" fill="#f0ee3c"/><text x="849.8" y="473" text-anchor="middle" font-family="Liberation Sans" font-weight="bold" font-size="13" fill="#eeec48">37</text><rect x="152.3" y="437" width="1.4" height="11" fill="#f0ee3c"/><circle cx="154.9" cy="666.0" r="1.6" fill="#f0ee3c"/><circle cx="213.4" cy="666.2" r="1.6" fill="#f0ee3c"/><circle cx="271.8" cy="666.4" r="1.6" fill="#f0ee3c"/><circle cx="330.2" cy="666.6" r="1.6" fill="#f0ee3c"/><circle cx="388.7" cy="666.8" r="1.6" fill="#f0ee3c"/><circle cx="447.2" cy="667.0" r="1.6" fill="#f0ee3c"/><circle cx="505.6" cy="667.2" r="1.6" fill="#f0ee3c"/><circle cx="564.1" cy="667.3" r="1.6" fill="#f0ee3c"/><circle cx="622.5" cy="667.5" r="1.6" fill="#f0ee3c"/><circle cx="681.0" cy="667.7" r="1.6" fill="#f0ee3c"/><circle cx="739.4" cy="667.9" r="1.6" fill="#f0ee3c"/><circle cx="797.9" cy="668.1" r="1.6" fill="#f0ee3c"/><circle cx="856.3" cy="668.3" r="1.6" fill="#f0ee3c"/><rect x="140.8" y="652.5" width="1.5" height="26" fill="#d8d83a"/><text x="113" y="788.5" font-family="Liberation Sans" font-weight="bold" font-size="47.5" fill="#5ef22e">Pass</text></svg>
<div class="a" style="left:31px;top:910px;width:328px;height:33px;background:#e3eaf8;border:1px solid #aab4c6"></div>
<div class="a" style="left:37px;top:915px;width:318px;height:24px;background:#fff;border:1px solid #b9c2d2"></div>
<div class="t" style="left:39px;top:921px;font-size:11.3px;color:#222">5472x3648 0.16X 8-bit image 2&nbsp;&nbsp;&nbsp; (4100,2431)</div>
<div class="a" style="left:735px;top:912px;width:102px;height:30px;background:#e8eef8"></div>
<div class="a" style="left:738px;top:915px;width:13px;height:22px;border:1px solid #c6ccd8;background:#f4f6fa"></div>
<svg class="a" style="left:740px;top:917px" width="10" height="18"><path d="M2,6 L5,3 L8,6Z M2,12 L5,15 L8,12Z" fill="#666"/></svg>
<div class="a" style="left:756px;top:915px;width:79px;height:23px;background:#fff;border:1px solid #b8bfcc"></div>
<div class="t" style="left:769px;top:921px;font-size:12.7px;color:#222">Top Cam</div>
<div class="a" style="left:843px;top:910px;width:35px;height:33px;background:#cfdcf3;border:1px solid #9fb0cc"></div>
<svg class="a" style="left:849px;top:914px" width="24" height="24" viewBox="0 0 24 24">
<circle cx="14" cy="10" r="6" fill="#e8f0f0" stroke="#333" stroke-width="1.6"/><path d="M11.5,9 V7.5 H13 M15,7.5 H16.5 V9 M16.5,11 V12.5 H15 M13,12.5 H11.5 V11" stroke="#666" stroke-width="1.2" fill="none"/>
<path d="M9.5,14.5 L3,21" stroke="#222" stroke-width="2.6" stroke-linecap="round"/></svg>
<div class="a" style="left:881px;top:910px;width:84px;height:33px;background:#dbe3f3;border:1px solid #9aa6ba"></div>
<div class="a" style="left:884px;top:913px;width:25px;height:27px;background:#fff"></div>
<div class="a" style="left:909px;top:913px;width:26px;height:27px;background:#dfe6f6;border-right:1px solid #b6c0d2;border-bottom:1px solid #b6c0d2"></div>
<div class="a" style="left:936px;top:913px;width:26px;height:27px;background:#e4eaf7;border-right:1px solid #b6c0d2;border-bottom:1px solid #b6c0d2"></div>
<svg class="a" style="left:886px;top:916px" width="22" height="22" viewBox="0 0 22 22">
<circle cx="12.5" cy="9" r="5.5" fill="#eef8f6" stroke="#2a2a2a" stroke-width="1.5"/>
<path d="M8.5,13 L3,18.5" stroke="#222" stroke-width="2.4" stroke-linecap="round"/></svg>
<svg class="a" style="left:912px;top:916px" width="21" height="20" viewBox="0 0 21 20">
<path d="M3.5,10.5 C2.5,8.8 4.5,7.6 5.8,9 L5.8,5.5 C5.8,3.8 8.2,3.8 8.2,5.5 L8.2,4 C8.2,2.3 10.6,2.3 10.6,4 L10.6,4 C10.6,2.5 13,2.5 13,4.2 L13,5.5 C13,4 15.4,4 15.4,5.8 L15.4,11.5 C15.4,15.5 13,18 9.8,18 C6.8,18 5,15.5 3.5,10.5 Z" fill="#fff" stroke="#222" stroke-width="1.3"/>
<path d="M8.2,5.5 V9.5 M10.6,4 V9.5 M13,5 V9.5" stroke="#222" stroke-width="1"/></svg>
<svg class="a" style="left:941px;top:918px" width="16" height="16"><path d="M8.5,4 V14 M3.5,9 H13.5" stroke="#333" stroke-width="1"/></svg>
<div class="a" style="left:980px;top:203px;width:907px;height:740px;background:#fafafa;border:1px solid #9c9c9c;box-shadow:inset 1px 1px 0 #c8c8c8"></div>
<div class="a" style="left:1868px;top:205px;width:18px;height:737px;background:#f0f0f0"></div>
<div class="a" style="left:1875px;top:223px;width:3px;height:121px;background:#9c9c9c"></div>
<div class="a" style="left:1315px;top:205px;width:1px;height:737px;background:#efefef"></div>
<div class="a" style="left:1463px;top:205px;width:1px;height:737px;background:#efefef"></div>
<div class="a" style="left:1582px;top:205px;width:1px;height:737px;background:#efefef"></div>
<div class="a" style="left:1725px;top:205px;width:1px;height:737px;background:#efefef"></div>
<div class="a" style="left:1840px;top:205px;width:1px;height:737px;background:#efefef"></div>
<div class="a" style="left:981px;top:204px;width:887px;height:738px;overflow:hidden">
<div class="row" style="top:0">
<div class="c" style="left:-59px;width:160px;font-weight:bold;font-size:13.3px;color:#1e1e1e;top:1px">S No.</div>
<div class="c" style="left:108px;width:160px;font-weight:bold;font-size:13.3px;color:#1e1e1e;top:1px">Measurement Name</div>
<div class="c" style="left:328px;width:160px;font-weight:bold;font-size:13.3px;color:#1e1e1e;top:1px">Lower Limit</div>
<div class="c" style="left:460px;width:160px;font-weight:bold;font-size:13.3px;color:#1e1e1e;top:1px">Upper Limit</div>
<div class="c" style="left:597px;width:160px;font-weight:bold;font-size:13.3px;color:#1e1e1e;top:1px">Actual Value</div>
<div class="c" style="left:726px;width:160px;font-weight:bold;font-size:13.3px;color:#1e1e1e;top:1px">Result</div>
</div>
<div class="row" style="top:19.75px">
<div class="a" style="left:0;top:0;width:887px;height:1px;background:#efefef"></div>
<div class="a" style="left:756px;top:1px;width:102px;height:19px;background:#86d98f"></div>
<div class="c" style="left:-59px;width:160px">1</div>
<div class="c" style="left:108px;width:160px">Image Process Success</div>
<div class="c" style="left:328px;width:160px">1.000</div>
<div class="c" style="left:460px;width:160px">1.000</div>
<div class="c" style="left:597px;width:160px">1.000</div>
<div class="c" style="left:726px;width:160px">Pass</div>
</div>
<div class="row" style="top:39.64px">
<div class="a" style="left:0;top:0;width:887px;height:1px;background:#efefef"></div>
<div class="a" style="left:756px;top:1px;width:102px;height:19px;background:#86d98f"></div>
<div class="c" style="left:-59px;width:160px">2</div>
<div class="c" style="left:108px;width:160px">Hole 1 Pitch</div>
<div class="c" style="left:328px;width:160px">1.750</div>
<div class="c" style="left:460px;width:160px">1.850</div>
<div class="c" style="left:597px;width:160px">1.803</div>
<div class="c" style="left:726px;width:160px">Pass</div>
</div>
<div class="row" style="top:59.52px">
<div class="a" style="left:0;top:0;width:887px;height:1px;background:#efefef"></div>
<div class="a" style="left:756px;top:1px;width:102px;height:19px;background:#86d98f"></div>
<div class="c" style="left:-59px;width:160px">3</div>
<div class="c" style="left:108px;width:160px">Hole 2 Pitch</div>
<div class="c" style="left:328px;width:160px">1.750</div>
<div class="c" style="left:460px;width:160px">1.850</div>
<div class="c" style="left:597px;width:160px">1.807</div>
<div class="c" style="left:726px;width:160px">Pass</div>
</div>
<div class="row" style="top:79.41px">
<div class="a" style="left:0;top:0;width:887px;height:1px;background:#efefef"></div>
<div class="a" style="left:756px;top:1px;width:102px;height:19px;background:#86d98f"></div>
<div class="c" style="left:-59px;width:160px">4</div>
<div class="c" style="left:108px;width:160px">Hole 3 Pitch</div>
<div class="c" style="left:328px;width:160px">1.750</div>
<div class="c" style="left:460px;width:160px">1.850</div>
<div class="c" style="left:597px;width:160px">1.814</div>
<div class="c" style="left:726px;width:160px">Pass</div>
</div>
<div class="row" style="top:99.29px">
<div class="a" style="left:0;top:0;width:887px;height:1px;background:#efefef"></div>
<div class="a" style="left:756px;top:1px;width:102px;height:19px;background:#86d98f"></div>
<div class="c" style="left:-59px;width:160px">5</div>
<div class="c" style="left:108px;width:160px">Hole 4 Pitch</div>
<div class="c" style="left:328px;width:160px">1.750</div>
<div class="c" style="left:460px;width:160px">1.850</div>
<div class="c" style="left:597px;width:160px">1.814</div>
<div class="c" style="left:726px;width:160px">Pass</div>
</div>
<div class="row" style="top:119.18px">
<div class="a" style="left:0;top:0;width:887px;height:1px;background:#efefef"></div>
<div class="a" style="left:756px;top:1px;width:102px;height:19px;background:#86d98f"></div>
<div class="c" style="left:-59px;width:160px">6</div>
<div class="c" style="left:108px;width:160px">Hole 5 Pitch</div>
<div class="c" style="left:328px;width:160px">1.750</div>
<div class="c" style="left:460px;width:160px">1.850</div>
<div class="c" style="left:597px;width:160px">1.817</div>
<div class="c" style="left:726px;width:160px">Pass</div>
</div>
<div class="row" style="top:139.07px">
<div class="a" style="left:0;top:0;width:887px;height:1px;background:#efefef"></div>
<div class="a" style="left:756px;top:1px;width:102px;height:19px;background:#86d98f"></div>
<div class="c" style="left:-59px;width:160px">7</div>
<div class="c" style="left:108px;width:160px">Hole 6 Pitch</div>
<div class="c" style="left:328px;width:160px">1.750</div>
<div class="c" style="left:460px;width:160px">1.850</div>
<div class="c" style="left:597px;width:160px">1.819</div>
<div class="c" style="left:726px;width:160px">Pass</div>
</div>
<div class="row" style="top:158.95px">
<div class="a" style="left:0;top:0;width:887px;height:1px;background:#efefef"></div>
<div class="a" style="left:756px;top:1px;width:102px;height:19px;background:#86d98f"></div>
<div class="c" style="left:-59px;width:160px">8</div>
<div class="c" style="left:108px;width:160px">Hole 7 Pitch</div>
<div class="c" style="left:328px;width:160px">1.750</div>
<div class="c" style="left:460px;width:160px">1.850</div>
<div class="c" style="left:597px;width:160px">1.819</div>
<div class="c" style="left:726px;width:160px">Pass</div>
</div>
<div class="row" style="top:178.84px">
<div class="a" style="left:0;top:0;width:887px;height:1px;background:#efefef"></div>
<div class="a" style="left:756px;top:1px;width:102px;height:19px;background:#86d98f"></div>
<div class="c" style="left:-59px;width:160px">9</div>
<div class="c" style="left:108px;width:160px">Hole 8 Pitch</div>
<div class="c" style="left:328px;width:160px">1.750</div>
<div class="c" style="left:460px;width:160px">1.850</div>
<div class="c" style="left:597px;width:160px">1.817</div>
<div class="c" style="left:726px;width:160px">Pass</div>
</div>
<div class="row" style="top:198.72px">
<div class="a" style="left:0;top:0;width:887px;height:1px;background:#efefef"></div>
<div class="a" style="left:756px;top:1px;width:102px;height:19px;background:#86d98f"></div>
<div class="c" style="left:-59px;width:160px">10</div>
<div class="c" style="left:108px;width:160px">Hole 9 Pitch</div>
<div class="c" style="left:328px;width:160px">1.750</div>
<div class="c" style="left:460px;width:160px">1.850</div>
<div class="c" style="left:597px;width:160px">1.817</div>
<div class="c" style="left:726px;width:160px">Pass</div>
</div>
<div class="row" style="top:218.61px">
<div class="a" style="left:0;top:0;width:887px;height:1px;background:#efefef"></div>
<div class="a" style="left:756px;top:1px;width:102px;height:19px;background:#86d98f"></div>
<div class="c" style="left:-59px;width:160px">11</div>
<div class="c" style="left:108px;width:160px">Hole 10 Pitch</div>
<div class="c" style="left:328px;width:160px">1.750</div>
<div class="c" style="left:460px;width:160px">1.850</div>
<div class="c" style="left:597px;width:160px">1.814</div>
<div class="c" style="left:726px;width:160px">Pass</div>
</div>
<div class="row" style="top:238.50px">
<div class="a" style="left:0;top:0;width:887px;height:1px;background:#efefef"></div>
<div class="a" style="left:756px;top:1px;width:102px;height:19px;background:#86d98f"></div>
<div class="c" style="left:-59px;width:160px">12</div>
<div class="c" style="left:108px;width:160px">Hole 11 Pitch</div>
<div class="c" style="left:328px;width:160px">1.750</div>
<div class="c" style="left:460px;width:160px">1.850</div>
<div class="c" style="left:597px;width:160px">1.810</div>
<div class="c" style="left:726px;width:160px">Pass</div>
</div>
<div class="row" style="top:258.38px">
<div class="a" style="left:0;top:0;width:887px;height:1px;background:#efefef"></div>
<div class="a" style="left:756px;top:1px;width:102px;height:19px;background:#86d98f"></div>
<div class="c" style="left:-59px;width:160px">13</div>
<div class="c" style="left:108px;width:160px">Hole 12 Pitch</div>
<div class="c" style="left:328px;width:160px">1.750</div>
<div class="c" style="left:460px;width:160px">1.850</div>
<div class="c" style="left:597px;width:160px">1.804</div>
<div class="c" style="left:726px;width:160px">Pass</div>
</div>
<div class="row" style="top:278.27px">
<div class="a" style="left:0;top:0;width:887px;height:1px;background:#efefef"></div>
<div class="a" style="left:756px;top:1px;width:102px;height:19px;background:#86d98f"></div>
<div class="c" style="left:-59px;width:160px">14</div>
<div class="c" style="left:108px;width:160px">Hole 1 Dia</div>
<div class="c" style="left:328px;width:160px">0.750</div>
<div class="c" style="left:460px;width:160px">0.850</div>
<div class="c" style="left:597px;width:160px">0.798</div>
<div class="c" style="left:726px;width:160px">Pass</div>
</div>
<div class="row" style="top:298.15px">
<div class="a" style="left:0;top:0;width:887px;height:1px;background:#efefef"></div>
<div class="a" style="left:756px;top:1px;width:102px;height:19px;background:#86d98f"></div>
<div class="c" style="left:-59px;width:160px">15</div>
<div class="c" style="left:108px;width:160px">Hole 2 Dia</div>
<div class="c" style="left:328px;width:160px">0.750</div>
<div class="c" style="left:460px;width:160px">0.850</div>
<div class="c" style="left:597px;width:160px">0.803</div>
<div class="c" style="left:726px;width:160px">Pass</div>
</div>
<div class="row" style="top:318.04px">
<div class="a" style="left:0;top:0;width:887px;height:1px;background:#efefef"></div>
<div class="a" style="left:756px;top:1px;width:102px;height:19px;background:#86d98f"></div>
<div class="c" style="left:-59px;width:160px">16</div>
<div class="c" style="left:108px;width:160px">Hole 3 Dia</div>
<div class="c" style="left:328px;width:160px">0.750</div>
<div class="c" style="left:460px;width:160px">0.850</div>
<div class="c" style="left:597px;width:160px">0.803</div>
<div class="c" style="left:726px;width:160px">Pass</div>
</div>
<div class="row" style="top:337.93px">
<div class="a" style="left:0;top:0;width:887px;height:1px;background:#efefef"></div>
<div class="a" style="left:756px;top:1px;width:102px;height:19px;background:#86d98f"></div>
<div class="c" style="left:-59px;width:160px">17</div>
<div class="c" style="left:108px;width:160px">Hole 4 Dia</div>
<div class="c" style="left:328px;width:160px">0.750</div>
<div class="c" style="left:460px;width:160px">0.850</div>
<div class="c" style="left:597px;width:160px">0.798</div>
<div class="c" style="left:726px;width:160px">Pass</div>
</div>
<div class="row" style="top:357.81px">
<div class="a" style="left:0;top:0;width:887px;height:1px;background:#efefef"></div>
<div class="a" style="left:756px;top:1px;width:102px;height:19px;background:#86d98f"></div>
<div class="c" style="left:-59px;width:160px">18</div>
<div class="c" style="left:108px;width:160px">Hole 5 Dia</div>
<div class="c" style="left:328px;width:160px">0.750</div>
<div class="c" style="left:460px;width:160px">0.850</div>
<div class="c" style="left:597px;width:160px">0.803</div>
<div class="c" style="left:726px;width:160px">Pass</div>
</div>
<div class="row" style="top:377.70px">
<div class="a" style="left:0;top:0;width:887px;height:1px;background:#efefef"></div>
<div class="a" style="left:756px;top:1px;width:102px;height:19px;background:#86d98f"></div>
<div class="c" style="left:-59px;width:160px">19</div>
<div class="c" style="left:108px;width:160px">Hole 6 Dia</div>
<div class="c" style="left:328px;width:160px">0.750</div>
<div class="c" style="left:460px;width:160px">0.850</div>
<div class="c" style="left:597px;width:160px">0.803</div>
<div class="c" style="left:726px;width:160px">Pass</div>
</div>
<div class="row" style="top:397.58px">
<div class="a" style="left:0;top:0;width:887px;height:1px;background:#efefef"></div>
<div class="a" style="left:756px;top:1px;width:102px;height:19px;background:#86d98f"></div>
<div class="c" style="left:-59px;width:160px">20</div>
<div class="c" style="left:108px;width:160px">Hole 7 Dia</div>
<div class="c" style="left:328px;width:160px">0.750</div>
<div class="c" style="left:460px;width:160px">0.850</div>
<div class="c" style="left:597px;width:160px">0.803</div>
<div class="c" style="left:726px;width:160px">Pass</div>
</div>
<div class="row" style="top:417.47px">
<div class="a" style="left:0;top:0;width:887px;height:1px;background:#efefef"></div>
<div class="a" style="left:756px;top:1px;width:102px;height:19px;background:#86d98f"></div>
<div class="c" style="left:-59px;width:160px">21</div>
<div class="c" style="left:108px;width:160px">Hole 8 Dia</div>
<div class="c" style="left:328px;width:160px">0.750</div>
<div class="c" style="left:460px;width:160px">0.850</div>
<div class="c" style="left:597px;width:160px">0.803</div>
<div class="c" style="left:726px;width:160px">Pass</div>
</div>
<div class="row" style="top:437.36px">
<div class="a" style="left:0;top:0;width:887px;height:1px;background:#efefef"></div>
<div class="a" style="left:756px;top:1px;width:102px;height:19px;background:#86d98f"></div>
<div class="c" style="left:-59px;width:160px">22</div>
<div class="c" style="left:108px;width:160px">Hole 9 Dia</div>
<div class="c" style="left:328px;width:160px">0.750</div>
<div class="c" style="left:460px;width:160px">0.850</div>
<div class="c" style="left:597px;width:160px">0.798</div>
<div class="c" style="left:726px;width:160px">Pass</div>
</div>
<div class="row" style="top:457.24px">
<div class="a" style="left:0;top:0;width:887px;height:1px;background:#efefef"></div>
<div class="a" style="left:756px;top:1px;width:102px;height:19px;background:#86d98f"></div>
<div class="c" style="left:-59px;width:160px">23</div>
<div class="c" style="left:108px;width:160px">Hole 10 Dia</div>
<div class="c" style="left:328px;width:160px">0.750</div>
<div class="c" style="left:460px;width:160px">0.850</div>
<div class="c" style="left:597px;width:160px">0.808</div>
<div class="c" style="left:726px;width:160px">Pass</div>
</div>
<div class="row" style="top:477.13px">
<div class="a" style="left:0;top:0;width:887px;height:1px;background:#efefef"></div>
<div class="a" style="left:756px;top:1px;width:102px;height:19px;background:#86d98f"></div>
<div class="c" style="left:-59px;width:160px">24</div>
<div class="c" style="left:108px;width:160px">Hole 11 Dia</div>
<div class="c" style="left:328px;width:160px">0.750</div>
<div class="c" style="left:460px;width:160px">0.850</div>
<div class="c" style="left:597px;width:160px">0.803</div>
<div class="c" style="left:726px;width:160px">Pass</div>
</div>
<div class="row" style="top:497.01px">
<div class="a" style="left:0;top:0;width:887px;height:1px;background:#efefef"></div>
<div class="a" style="left:756px;top:1px;width:102px;height:19px;background:#86d98f"></div>
<div class="c" style="left:-59px;width:160px">25</div>
<div class="c" style="left:108px;width:160px">Hole 12 Dia</div>
<div class="c" style="left:328px;width:160px">0.750</div>
<div class="c" style="left:460px;width:160px">0.850</div>
<div class="c" style="left:597px;width:160px">0.803</div>
<div class="c" style="left:726px;width:160px">Pass</div>
</div>
<div class="row" style="top:516.90px">
<div class="a" style="left:0;top:0;width:887px;height:1px;background:#efefef"></div>
<div class="a" style="left:756px;top:1px;width:102px;height:19px;background:#86d98f"></div>
<div class="c" style="left:-59px;width:160px">26</div>
<div class="c" style="left:108px;width:160px">Hole 13 Dia</div>
<div class="c" style="left:328px;width:160px">0.750</div>
<div class="c" style="left:460px;width:160px">0.850</div>
<div class="c" style="left:597px;width:160px">0.798</div>
<div class="c" style="left:726px;width:160px">Pass</div>
</div>
<div class="row" style="top:536.79px">
<div class="a" style="left:0;top:0;width:887px;height:1px;background:#efefef"></div>
<div class="a" style="left:756px;top:1px;width:102px;height:19px;background:#86d98f"></div>
<div class="c" style="left:-59px;width:160px">27</div>
<div class="c" style="left:108px;width:160px">Top Contact Pin 1 Pitch</div>
<div class="c" style="left:328px;width:160px">0.530</div>
<div class="c" style="left:460px;width:160px">0.660</div>
<div class="c" style="left:597px;width:160px">0.592</div>
<div class="c" style="left:726px;width:160px">Pass</div>
</div>
<div class="row" style="top:556.67px">
<div class="a" style="left:0;top:0;width:887px;height:1px;background:#efefef"></div>
<div class="a" style="left:756px;top:1px;width:102px;height:19px;background:#86d98f"></div>
<div class="c" style="left:-59px;width:160px">28</div>
<div class="c" style="left:108px;width:160px">Top Contact Pin 2 Pitch</div>
<div class="c" style="left:328px;width:160px">0.530</div>
<div class="c" style="left:460px;width:160px">0.660</div>
<div class="c" style="left:597px;width:160px">0.604</div>
<div class="c" style="left:726px;width:160px">Pass</div>
</div>
<div class="row" style="top:576.56px">
<div class="a" style="left:0;top:0;width:887px;height:1px;background:#efefef"></div>
<div class="a" style="left:756px;top:1px;width:102px;height:19px;background:#86d98f"></div>
<div class="c" style="left:-59px;width:160px">29</div>
<div class="c" style="left:108px;width:160px">Top Contact Pin 3 Pitch</div>
<div class="c" style="left:328px;width:160px">0.530</div>
<div class="c" style="left:460px;width:160px">0.660</div>
<div class="c" style="left:597px;width:160px">0.573</div>
<div class="c" style="left:726px;width:160px">Pass</div>
</div>
<div class="row" style="top:596.44px">
<div class="a" style="left:0;top:0;width:887px;height:1px;background:#efefef"></div>
<div class="a" style="left:756px;top:1px;width:102px;height:19px;background:#86d98f"></div>
<div class="c" style="left:-59px;width:160px">30</div>
<div class="c" style="left:108px;width:160px">Top Contact Pin 4 Pitch</div>
<div class="c" style="left:328px;width:160px">0.530</div>
<div class="c" style="left:460px;width:160px">0.660</div>
<div class="c" style="left:597px;width:160px">0.596</div>
<div class="c" style="left:726px;width:160px">Pass</div>
</div>
<div class="row" style="top:616.33px">
<div class="a" style="left:0;top:0;width:887px;height:1px;background:#efefef"></div>
<div class="a" style="left:756px;top:1px;width:102px;height:19px;background:#86d98f"></div>
<div class="c" style="left:-59px;width:160px">31</div>
<div class="c" style="left:108px;width:160px">Top Contact Pin 5 Pitch</div>
<div class="c" style="left:328px;width:160px">0.530</div>
<div class="c" style="left:460px;width:160px">0.660</div>
<div class="c" style="left:597px;width:160px">0.609</div>
<div class="c" style="left:726px;width:160px">Pass</div>
</div>
<div class="row" style="top:636.22px">
<div class="a" style="left:0;top:0;width:887px;height:1px;background:#efefef"></div>
<div class="a" style="left:756px;top:1px;width:102px;height:19px;background:#86d98f"></div>
<div class="c" style="left:-59px;width:160px">32</div>
<div class="c" style="left:108px;width:160px">Top Contact Pin 6 Pitch</div>
<div class="c" style="left:328px;width:160px">0.530</div>
<div class="c" style="left:460px;width:160px">0.660</div>
<div class="c" style="left:597px;width:160px">0.564</div>
<div class="c" style="left:726px;width:160px">Pass</div>
</div>
<div class="row" style="top:656.10px">
<div class="a" style="left:0;top:0;width:887px;height:1px;background:#efefef"></div>
<div class="a" style="left:756px;top:1px;width:102px;height:19px;background:#86d98f"></div>
<div class="c" style="left:-59px;width:160px">33</div>
<div class="c" style="left:108px;width:160px">Top Contact Pin 7 Pitch</div>
<div class="c" style="left:328px;width:160px">0.530</div>
<div class="c" style="left:460px;width:160px">0.660</div>
<div class="c" style="left:597px;width:160px">0.597</div>
<div class="c" style="left:726px;width:160px">Pass</div>
</div>
<div class="row" style="top:675.99px">
<div class="a" style="left:0;top:0;width:887px;height:1px;background:#efefef"></div>
<div class="a" style="left:756px;top:1px;width:102px;height:19px;background:#86d98f"></div>
<div class="c" style="left:-59px;width:160px">34</div>
<div class="c" style="left:108px;width:160px">Top Contact Pin 8 Pitch</div>
<div class="c" style="left:328px;width:160px">0.530</div>
<div class="c" style="left:460px;width:160px">0.660</div>
<div class="c" style="left:597px;width:160px">0.605</div>
<div class="c" style="left:726px;width:160px">Pass</div>
</div>
<div class="row" style="top:695.87px">
<div class="a" style="left:0;top:0;width:887px;height:1px;background:#efefef"></div>
<div class="a" style="left:756px;top:1px;width:102px;height:19px;background:#86d98f"></div>
<div class="c" style="left:-59px;width:160px">35</div>
<div class="c" style="left:108px;width:160px">Top Contact Pin 9 Pitch</div>
<div class="c" style="left:328px;width:160px">0.530</div>
<div class="c" style="left:460px;width:160px">0.660</div>
<div class="c" style="left:597px;width:160px">0.577</div>
<div class="c" style="left:726px;width:160px">Pass</div>
</div>
<div class="row" style="top:715.76px">
<div class="a" style="left:0;top:0;width:887px;height:1px;background:#efefef"></div>
<div class="a" style="left:756px;top:1px;width:102px;height:19px;background:#86d98f"></div>
<div class="c" style="left:-59px;width:160px">36</div>
<div class="c" style="left:108px;width:160px">Top Contact Pin 10 Pitch</div>
<div class="c" style="left:328px;width:160px">0.530</div>
<div class="c" style="left:460px;width:160px">0.660</div>
<div class="c" style="left:597px;width:160px">0.596</div>
<div class="c" style="left:726px;width:160px">Pass</div>
</div>
</div>
<div class="a" style="left:12px;top:969px;width:1893px;height:40px;background:#fff"></div>
<div class="a" style="left:57px;top:976px;width:1826px;height:27px;background:#88e292;border-radius:5px"></div>
<div class="a" style="left:1836px;top:976px;width:47px;height:27px;background:#f5606e;border-radius:0 5px 5px 0"></div>
<div class="t" style="left:928px;top:981px;font-size:16px;color:#1f3a20">5167</div>
<div class="t" style="left:1845px;top:982px;font-size:16px;color:#3a0a0a">115</div>
<div class="a" style="left:0;top:1012px;width:1920px;height:64px;background:#f1f1f1"></div>
<div class="a" style="left:14px;top:1023px;width:118px;height:40px;background:#c9e0f5;border:1.5px solid #2a5b8c"></div>
<div class="a" style="left:24px;top:1032px;width:22px;height:23px;background:#1e6fc0"></div>
<div class="t" style="left:75px;top:1038px;font-size:13.5px;font-weight:bold;color:#1a1a2a;letter-spacing:-0.4px">Stop</div>
<div class="a" style="left:163px;top:1028px;width:1598px;height:29px;background:#efefef;border:1.5px solid #c8c8c8"></div>
<div class="t" style="left:865px;top:1033px;font-size:16.5px;color:#252525">Inspection - In Progress...</div>
<div class="a" style="left:1794px;top:1025px;width:111px;height:37px;background:#f3f3f3;border:1px solid #e8e8e8"></div>
<svg class="a" style="left:1798px;top:1027px" width="32" height="32" viewBox="0 0 32 32">
<path d="M3,3 L13,3 L13,29 L3,29 Z" fill="#8fbde6"/><path d="M13,3 L19,3 L19,10 M19,22 L19,29 L13,29" stroke="#9cc4e8" stroke-width="1.5" fill="none"/>
<path d="M16,16 H27 M23,12 L27,16 L23,20" stroke="#8fbde6" stroke-width="1.8" fill="none"/></svg>
<div class="t" style="left:1847px;top:1036px;font-size:14px;color:#9a9a9a">Exit</div>
<div class="a" style="left:0;top:1076px;width:1920px;height:4px;background:#111"></div>
</body></html>
